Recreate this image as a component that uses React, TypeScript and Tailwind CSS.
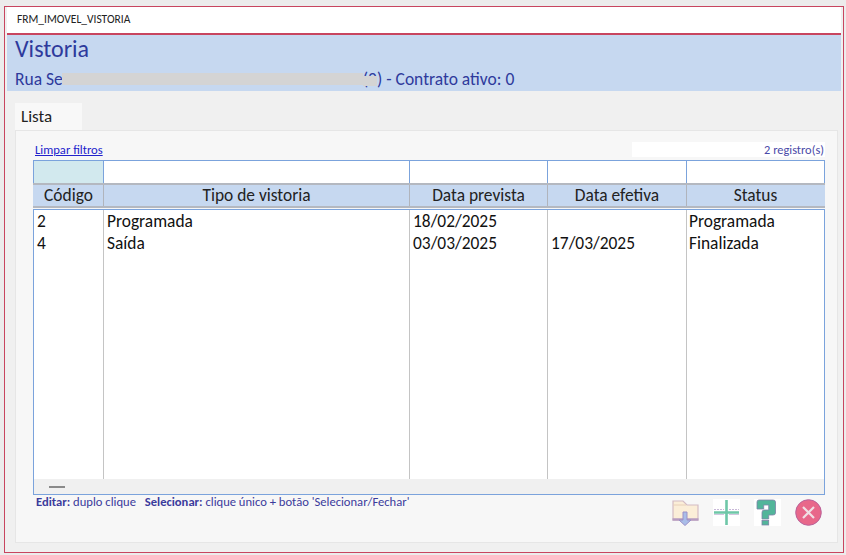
import React from "react";

const font = "font-['Carlito','Lato','Liberation_Sans',sans-serif]";

const cols = ["w-[70px]", "w-[306px]", "w-[138px]", "w-[139px]", "flex-1"];
const heads = ["Código", "Tipo de vistoria", "Data prevista", "Data efetiva", "Status"];
const rows = [
  ["2", "Programada", "18/02/2025", "", "Programada"],
  ["4", "Saída", "03/03/2025", "17/03/2025", "Finalizada"],
];

function FolderIcon() {
  return (
    <svg width="27" height="27" viewBox="0 0 27 27">
      <path d="M1 2h10l4 4h11v15H1z" fill="#fbeed8" stroke="#d4bcc4" strokeWidth="1.2" />
      <path d="M1 6h13" stroke="#e8d0b8" strokeWidth="1" fill="none" />
      <path d="M0.500 20.500h26" stroke="#b79cc0" strokeWidth="2.500" fill="none" />
      <path d="M11 13h4v8h4l-6 5.500L7 21h4z" fill="#a9bde8" stroke="#9a90c8" strokeWidth="1" />
    </svg>
  );
}

function PlusIcon() {
  return (
    <svg width="27" height="27" viewBox="0 0 27 27" className="bg-white">
      <path d="M1 10.500h10M16 10.500h10" stroke="#c8b8d8" strokeWidth="1.200" strokeDasharray="2 1" />
      <path d="M13.500 1v25M1 13.500h25" stroke="#6fc7a8" strokeWidth="2.600" />
      <path d="M1 15.500h10M16 15.500h10" stroke="#c8b8d8" strokeWidth="0.800" />
    </svg>
  );
}

function HelpIcon() {
  return (
    <svg width="27" height="27" viewBox="0 0 27 27" className="bg-white">
      <path
        d="M3 3Q3 1 5 1h14q2.500 0 2.500 2v11q0 2-2.500 2h-4.300v4H8v-6.500q0-2.500 2-2.500h4.700V6h-5v4H3z"
        fill="#52b59a"
        stroke="#7d83a8"
        strokeWidth="0.800"
      />
      <rect x="8" y="21.500" width="6.700" height="4.500" fill="#52b59a" stroke="#7d83a8" strokeWidth="0.800" />
    </svg>
  );
}

function CloseIcon() {
  return (
    <svg width="27" height="27" viewBox="0 0 27 27">
      <circle cx="13.500" cy="13.500" r="12.800" fill="#e8678a" stroke="#b8629a" strokeWidth="1" />
      <path d="M8 8l11 11M19 8L8 19" stroke="#f0dfe4" strokeWidth="2.200" />
    </svg>
  );
}

export default function App() {
  return (
    <div className={`${font} h-[555px] w-[846px] overflow-hidden bg-[#ececec] pb-0.5 pl-1 pr-0.5 pt-1.5`}>
      <div className="flex h-full flex-col border border-[#c8455f] bg-[#f0f0f0] px-0.5">
        <div className="flex h-[26px] items-center bg-white pl-[10px] text-[11.5px] text-[#222]">
          FRM_IMOVEL_VISTORIA
        </div>
        <div className="h-[58px] border-t-2 border-[#c8455f] bg-[#c6d8f0] pl-2 text-[#2e3a9c]">
          <div className="h-[30px] text-[24px] leading-[28px]">Vistoria</div>
          <div className="mt-[4px] flex items-center text-[17.5px] leading-[20px]">
            Rua Se
            <span className="ml-[-1px] h-[12px] w-[301px] bg-[#d4d4d4]" />
            <span className="relative">
              (2
              <span className="absolute inset-x-0 top-[7px] h-[10px] bg-[#d4d4d4]" />
            </span>
            ) - Contrato ativo: 0
          </div>
        </div>

        <div className="flex flex-1 flex-col pb-[9px] pl-2 pr-[3px] pt-3">
          <div className="flex h-[27px] w-[67px] items-center bg-[#f8f8f8] pl-1.5 text-[17px] text-[#222]">
            Lista
          </div>
          <div className="flex flex-1 flex-col border border-[#e6e6e6] bg-[#f7f7f7] pl-[17px] pr-[12px]">
            <div className="flex h-[29px] items-end justify-between pb-[3px]">
              <a className="pl-[2px] text-[12.6px] leading-[14px] text-[#2222cc] underline">Limpar filtros</a>
              <div className="w-[193px] bg-white pr-px text-right text-[12.4px] leading-[15px] text-[#4a4aa8]">
                2 registro(s)
              </div>
            </div>

            <div className="flex h-[23px] border border-b-0 border-[#7ba3dc] bg-white">
              {cols.map((w, i) => (
                <div
                  key={w + i}
                  className={`${w} ${i === 0 ? "bg-[#d2e9ee]" : ""} border-r border-[#7ba3dc] last:border-r-0`}
                />
              ))}
            </div>
            <div className="flex h-[25px] border-y-2 border-[#b4b8c0] bg-[#c6d8f0] px-px text-[17.4px] text-[#222]">
              {heads.map((h, i) => (
                <div
                  key={h}
                  className={`${cols[i]} flex items-center justify-center border-r border-[#b0b4bc] last:border-r-0`}
                >
                  {h}
                </div>
              ))}
            </div>
            <div className="mt-px flex h-[286px] flex-col border border-[#7ba3dc] bg-white text-[17.4px] leading-[22px] text-[#111]">
              <div className="flex flex-1">
                {cols.map((w, i) => (
                  <div key={w + i} className={`${w} border-r border-[#c4c4c4] pl-[3px] last:border-r-0 last:pl-[2px]`}>
                    {rows.map((r, j) => (
                      <div key={j} className="h-[22px]">
                        {r[i]}
                      </div>
                    ))}
                  </div>
                ))}
              </div>
              <div className="flex h-[15px] items-center bg-[#f0f0f0] pl-[15px]">
                <div className="h-[2px] w-[16px] bg-[#8a8a8a]" />
              </div>
            </div>

            <div className="flex h-[47px] justify-between pl-[3px]">
              <div className="text-[12.6px] leading-[13px] text-[#3b3b9c]">
                <b>Editar:</b> duplo clique <b className="ml-1.5">Selecionar:</b> clique único + botão
                'Selecionar/Fechar'
              </div>
              <div className="mr-[3px] mt-[4px] flex h-[27px] gap-[14px]">
                <FolderIcon />
                <PlusIcon />
                <HelpIcon />
                <CloseIcon />
              </div>
            </div>
          </div>
        </div>
      </div>
    </div>
  );
}
